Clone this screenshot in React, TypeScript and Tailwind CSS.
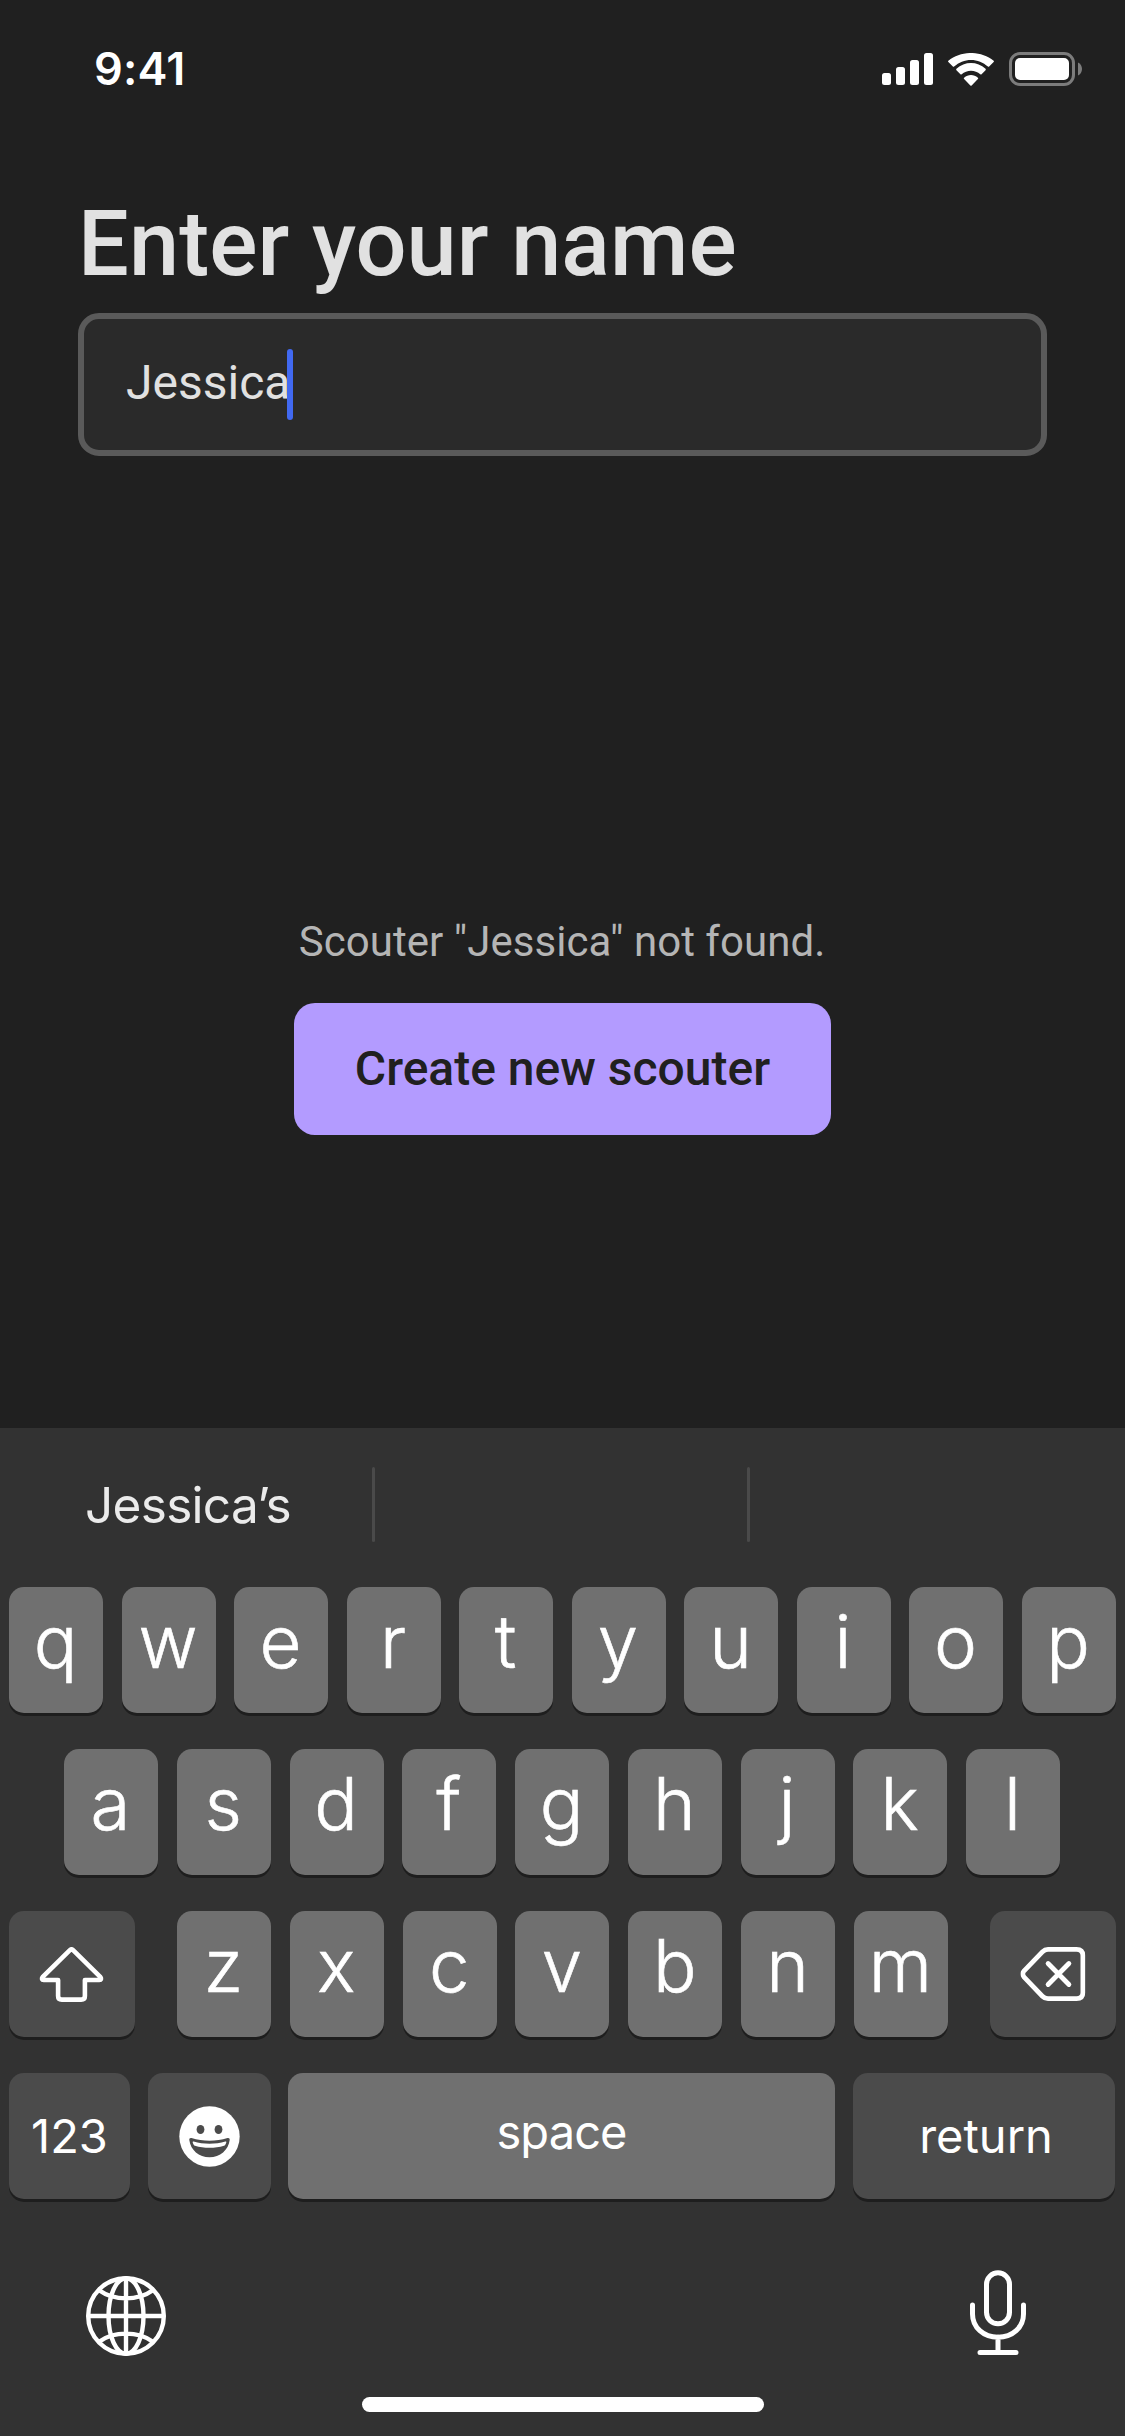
import type { ReactNode } from "react";

function CellularIcon() {
  return (
    <svg className="h-8 w-[51px]" viewBox="0 0 51 32" fill="#fff">
      <rect x="0" y="20" width="9" height="12" rx="2.5" />
      <rect x="14" y="14" width="9" height="18" rx="2.5" />
      <rect x="28" y="7" width="9" height="25" rx="2.5" />
      <rect x="42" y="0" width="9" height="32" rx="2.5" />
    </svg>
  );
}

function WifiIcon() {
  return (
    <svg className="h-[33px] w-[46px]" viewBox="0 0 46 33" fill="#fff">
      <path d="M23 6.9c6.3 0 12.3 2.4 16.9 6.7.35.33.9.33 1.25 0l4.5-4.6a.9.9 0 0 0 0-1.3C33-2.6 13-2.6.35 7.7a.9.9 0 0 0 0 1.3l4.5 4.6c.35.33.9.33 1.25 0C10.7 9.3 16.7 6.9 23 6.9z" />
      <path d="M23 17.7c3.4 0 6.8 1.3 9.3 3.6.35.35.9.34 1.24 0l4-4.1a.95.95 0 0 0 0-1.35c-8.2-7.8-20.9-7.8-29.1 0a.95.95 0 0 0 0 1.35l4 4.1c.34.34.9.35 1.24 0 2.55-2.3 5.9-3.6 9.3-3.6z" />
      <path d="M29.9 26a.9.9 0 0 0 0-1.35c-4-3.4-9.8-3.4-13.8 0a.9.9 0 0 0 0 1.35l6.25 6.4c.35.35.95.35 1.3 0z" />
    </svg>
  );
}

function BatteryIcon() {
  return (
    <svg className="h-[34px] w-[74px]" viewBox="0 0 74 34">
      <rect x="1.5" y="1.5" width="63" height="31" rx="9.5" fill="none" stroke="#7c7c7c" strokeWidth="3" />
      <rect x="6" y="6" width="54" height="22" rx="5" fill="#fff" />
      <path d="M69 10.5v13c2.4-1.1 4-3.6 4-6.5s-1.6-5.4-4-6.5z" fill="#7c7c7c" />
    </svg>
  );
}

function ShiftIcon() {
  return (
    <svg className="h-[55px] w-[64px] -translate-x-[0.5px]" viewBox="0 0 64 55" fill="none" stroke="#fff" strokeWidth="4.6" strokeLinejoin="round">
      <path d="M30.400 3.200 3 30.200c-1.200 1.300-.6 2.800 1.200 2.800H18.600V49c0 2.400 1.300 3.600 3.700 3.600H41.700c2.400 0 3.700-1.200 3.700-3.600V33H59.800c1.800 0 2.400-1.500 1.200-2.800L33.600 3.200c-1-1-2.200-1-3.200 0z" />
    </svg>
  );
}

function BackspaceIcon() {
  return (
    <svg className="h-[54px] w-[65px] -translate-x-[0.5px]" viewBox="0 0 65 54" fill="none" stroke="#fff" strokeWidth="4.8" strokeLinecap="round" strokeLinejoin="round">
      <path d="M27.500 2.400H56c4.400 0 6.400 2 6.400 6.200V45.400c0 4.200-2 6.200-6.400 6.200H27.500c-2.200 0-4-.8-5.600-2.400L3.600 30.200c-1.700-2-1.700-4.400 0-6.400L21.900 4.800C23.500 3.200 25.300 2.400 27.500 2.400z" />
      <path d="M27.600 16.500 48.400 37.500M48.400 16.500 27.600 37.500" />
    </svg>
  );
}

function EmojiIcon() {
  return (
    <svg className="size-[61px]" viewBox="0 0 61 61">
      <circle cx="30.500" cy="30.500" r="30.200" fill="#fff" />
      <ellipse cx="21.500" cy="23.500" rx="3.900" ry="4.500" fill="#4b4b4b" />
      <ellipse cx="39.500" cy="23.500" rx="3.900" ry="4.500" fill="#4b4b4b" />
      <path d="M12.500 32c11.500 3.600 24.500 3.600 36 0 1.600-.3 2.400.5 2.200 2C49.500 44 41 51.300 30.500 51.300S11.500 44 10.300 34c-.2-1.500.6-2.300 2.200-2z" fill="#4b4b4b" />
      <path d="M14.600 35.600c10 2.900 21.800 2.900 31.800 0 .8-.2 1.100.2.900.9-.6 2-1.300 3-2.300 3.300-9 2.700-20 2.700-29 0-1-.3-1.700-1.300-2.300-3.300-.2-.7.100-1.100.9-.9z" fill="#fff" />
    </svg>
  );
}

function GlobeIcon() {
  return (
    <svg className="size-20" viewBox="0 0 80 80" fill="none" stroke="#fff" strokeWidth="4.400">
      <circle cx="40" cy="40" r="37.800" />
      <ellipse cx="40" cy="40" rx="17.500" ry="37.800" />
      <path d="M40 2v76M2 40h76M13.500 14.500c14.500 10.500 38.500 10.500 53 0M13.500 65.500c14.500-10.500 38.500-10.500 53 0" />
    </svg>
  );
}

function MicIcon() {
  return (
    <svg className="h-[85px] w-14" viewBox="0 0 56 85" fill="none" stroke="#fff" strokeWidth="5" strokeLinecap="round">
      <rect x="16.500" y="2.800" width="23" height="51" rx="11.500" />
      <path d="M2.500 35v9C2.500 57.500 13.500 67.200 28 67.200s25.500-9.700 25.500-23.200v-9M28 67v15M10 82.500h36" />
    </svg>
  );
}

type KeyProps = { children: ReactNode; className: string };

function Key({ children, className }: KeyProps) {
  return (
    <div className={`flex h-[126px] shrink-0 justify-center rounded-[15px] text-white shadow-[0_3px_0_#1e1e1e] ${className}`}>
      {children}
    </div>
  );
}

function LetterKey({ letter }: { letter: string }) {
  return (
    <Key className="w-[94px] bg-[#707070] pr-px text-[72.500px] leading-[109px] font-light [-webkit-text-stroke:0.6px_white]">
      <span>{letter}</span>
    </Key>
  );
}

function Letters({ row }: { row: string }) {
  return (
    <>
      {row.split("").map((letter) => (
        <LetterKey key={letter} letter={letter} />
      ))}
    </>
  );
}

function StatusBar() {
  return (
    <header className="flex h-[138px] items-start justify-between pr-[42px] pl-[94px]">
      <span className="pt-[42px] text-[45px] leading-[54px] font-semibold tracking-[0.2px] text-white">9:41</span>
      <div className="flex items-center pt-[52px]">
        <CellularIcon />
        <div className="ml-[15px]"><WifiIcon /></div>
        <div className="ml-[15px]"><BatteryIcon /></div>
      </div>
    </header>
  );
}

function Keyboard() {
  return (
    <section className="flex h-[1008px] flex-col bg-[#323232]">
      <div className="flex h-[159px] items-start pt-[39px]">
        <div className="w-[372px] pl-[85px] text-[49.500px] leading-[76px] tracking-[-0.7px] text-[#ebebeb]">Jessica’s</div>
        <div className="h-[75px] w-[3px] rounded-full bg-[#4a4a4a]" />
        <div className="w-[372px]" />
        <div className="h-[75px] w-[3px] rounded-full bg-[#4a4a4a]" />
      </div>
      <div className="flex flex-col gap-9">
        <div className="flex justify-between pr-[9.500px] pl-[9px]"><Letters row="qwertyuiop" /></div>
        <div className="flex justify-between pr-[65px] pl-[64px]"><Letters row="asdfghjkl" /></div>
        <div className="flex justify-between px-[9px]">
          <Key className="w-[126px] items-center bg-[#4b4b4b]"><ShiftIcon /></Key>
          <div className="flex w-[771px] justify-between"><Letters row="zxcvbnm" /></div>
          <Key className="w-[126px] items-center bg-[#4b4b4b]"><BackspaceIcon /></Key>
        </div>
        <div className="flex pl-[9px] text-[47px] leading-[126px]">
          <Key className="w-[121px] bg-[#4b4b4b]">123</Key>
          <Key className="ml-[18px] w-[123px] items-center bg-[#4b4b4b]"><EmojiIcon /></Key>
          <Key className="ml-[17px] w-[547px] bg-[#707070] leading-[118px] tracking-[-0.9px]">space</Key>
          <Key className="ml-[18px] w-[262px] bg-[#4b4b4b] pl-[4px]">return</Key>
        </div>
      </div>
      <div className="flex items-start justify-between pt-[71px] pr-[99px] pl-[86px]">
        <div className="pt-[6px]"><GlobeIcon /></div>
        <MicIcon />
      </div>
      <div className="mt-[41px] ml-[362px] h-[15px] w-[402px] rounded-full bg-white" />
    </section>
  );
}

export default function App() {
  return (
    <div className="flex h-[2436px] w-[1125px] flex-col overflow-hidden bg-[#202020] font-['Inter',sans-serif]">
      <StatusBar />
      <main className="flex h-[1290px] flex-col px-[78px] pt-[54px] font-['Roboto',sans-serif]">
        <h1 className="h-[121px] text-[90px] leading-[106px] font-medium tracking-[0.1px] text-[#e1e1e1]">Enter your name</h1>
        <div className="flex h-[143px] items-start rounded-[21px] border-[6px] border-[#5a5a5a] bg-[#2a2a2a] pt-[30px] pl-[42px]">
          <span className="text-[48px] leading-[68px] text-[#e1e1e1]">Jessica</span>
          <span className="-ml-[3px] h-[71px] w-[6px] rounded-full bg-[#4169f1]" />
        </div>
        <div className="mt-[460px] flex flex-col items-center">
          <p className="pr-px text-[42px] leading-[52px] tracking-[0.04px] whitespace-nowrap text-[#b5b5b5]">Scouter "Jessica" not found.</p>
          <button className="mt-[35px] h-[132px] w-[537px] rounded-[21px] bg-[#b39bff] text-[48px] leading-[132px] font-medium text-[#202020]">
            Create new scouter
          </button>
        </div>
      </main>
      <Keyboard />
    </div>
  );
}
